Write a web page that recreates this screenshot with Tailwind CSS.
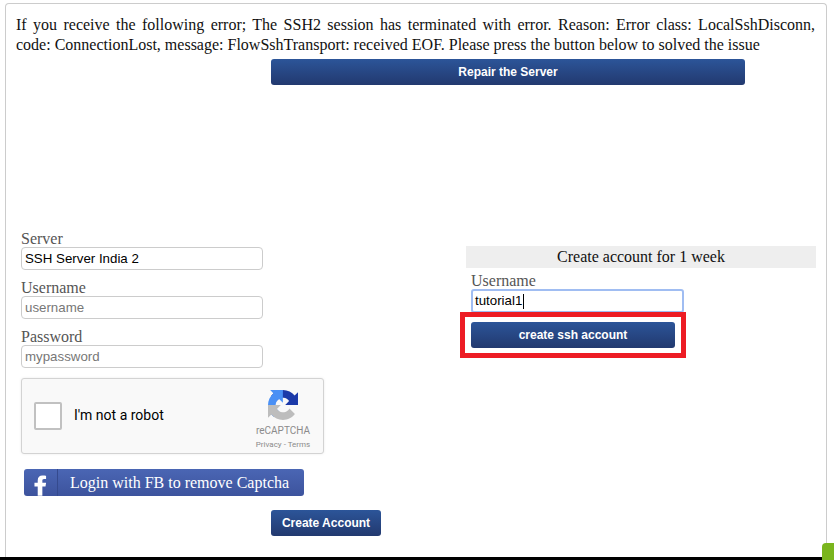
<!DOCTYPE html>
<html><head><meta charset="utf-8"><script src="https://cdn.jsdelivr.net/npm/@tailwindcss/browser@4"></script></head>
<body class="bg-white overflow-hidden">
<div class="relative h-[560px] w-[834px] overflow-hidden font-['Liberation_Serif',serif]">
  <main class="mx-[5px] mt-[3px] h-[554px] w-[822px] rounded-t-[4px] border border-b-0 border-[#cccccc] pl-[10px] pr-[11px] pt-[11px]">
    <div class="text-[16px] leading-[20px] text-[#111]">
      <p class="[text-align-last:justify]">If you receive the following error; The SSH2 session has terminated with error. Reason: Error class: LocalSshDisconn,</p>
      <p>code: ConnectionLost, message: FlowSshTransport: received EOF. Please press the button below to solved the issue</p>
    </div>
    <button class="ml-[255px] mt-[4px] block h-[26px] w-[474px] rounded-[3px] bg-gradient-to-b from-[#2c5599] to-[#22396f] font-['Liberation_Sans',sans-serif] text-[12px] font-bold text-white">Repair the Server</button>
    <div class="mt-[144px] flex">
      <section class="w-[450px] shrink-0 pl-[5px]">
        <label class="block h-[18px] text-[16px] leading-[20px] text-[#555]">Server</label>
        <div class="flex h-[23px] w-[242px] items-center rounded-[4px] border border-[#cccccc] pl-[3px] font-['Liberation_Sans',sans-serif] text-[13.3px] text-black">SSH Server India 2</div>
        <label class="mt-[9px] block h-[17px] text-[16px] leading-[18px] text-[#555]">Username</label>
        <div class="flex h-[23px] w-[242px] items-center rounded-[4px] border border-[#cccccc] pl-[3px] font-['Liberation_Sans',sans-serif] text-[13.3px] text-[#777]">username</div>
        <label class="mt-[9px] block h-[17px] text-[16px] leading-[18px] text-[#555]">Password</label>
        <div class="flex h-[23px] w-[242px] items-center rounded-[4px] border border-[#cccccc] pl-[3px] font-['Liberation_Sans',sans-serif] text-[13.3px] text-[#777]">mypassword</div>
        <div class="mt-[10px] flex h-[76px] w-[303px] items-center rounded-[3px] border border-[#d3d3d3] bg-[#f9f9f9] pl-[12px] shadow-[0_0_3px_rgba(0,0,0,0.08)] font-['Roboto',sans-serif]">
          <span class="block h-[28px] w-[28px] rounded-[2px] border-2 border-[#c1c1c1] bg-white"></span>
          <span class="ml-[12px] pb-[2px] text-[14px] text-black">I'm not a robot</span>
          <div class="ml-auto mr-[12px] flex w-[56px] flex-col items-center self-start pt-[11px] text-[#8b8b8b]">
            <svg width="30" height="30" viewBox="0 0 64 64" aria-hidden="true">
              <path d="M64 31.955l-.033-1.37V4.687l-7.16 7.16C50.948 4.674 42.033.093 32.05.093c-10.4 0-19.622 4.96-25.458 12.64l11.736 11.86c1.15-2.127 2.785-3.954 4.76-5.33 2.05-1.6 4.952-2.908 8.962-2.908.485 0 .86.057 1.133.163 4.967.392 9.273 3.134 11.808 7.11l-8.307 8.307c10.522-.04 22.4-.066 27.3.006" fill="#1c3aa9"/>
              <path d="M31.862.094l-1.37.033H4.594l7.16 7.16C4.58 13.147 0 22.06 0 32.046c0 10.4 4.96 19.622 12.64 25.458l11.86-11.736c-2.127-1.15-3.954-2.785-5.33-4.76-1.6-2.05-2.908-4.952-2.908-8.962 0-.485.057-.86.163-1.133.392-4.967 3.134-9.273 7.11-11.808l8.307 8.307c-.04-10.522-.066-22.4.006-27.3" fill="#4a90f5"/>
              <path d="M.001 32.045l.033 1.37v25.898l7.16-7.16c5.86 7.173 14.774 11.754 24.76 11.754 10.4 0 19.622-4.96 25.458-12.64l-11.736-11.86c-1.15 2.127-2.785 3.954-4.76 5.33-2.05 1.6-4.952 2.908-8.962 2.908-.485 0-.86-.057-1.133-.163-4.967-.392-9.273-3.134-11.808-7.11l8.307-8.307c-10.522.04-22.4.066-27.3-.006" fill="#bdbdbd"/>
            </svg>
            <span class="mt-[5px] text-[10px] leading-[12px]">reCAPTCHA</span>
            <span class="mt-[3px] whitespace-nowrap text-[8px] leading-[10px]">Privacy - Terms</span>
          </div>
        </div>
        <button class="mt-[15px] ml-[3px] flex h-[27px] w-[280px] items-stretch overflow-hidden rounded-[3px] bg-gradient-to-b from-[#4a66b4] to-[#3d539d] text-white">
          <span class="flex w-[34px] items-end justify-center border-r border-[#354a8e]">
            <svg width="13" height="21" viewBox="0 0 14 22" aria-hidden="true"><path d="M4 22 V12 H0.5 V8 H4 V5.5 C4 2 6 0.3 9 0.3 C10.8 0.3 12.2 0.5 13 0.6 V4 H11 C9.3 4 9 4.8 9 6 V8 H13 L12.4 12 H9 V22 Z" fill="#fff"/></svg>
          </span>
          <span class="pl-[12px] text-[16px] leading-[27px] whitespace-nowrap">Login with FB to remove Captcha</span>
        </button>
        <button class="ml-[250px] mt-[14px] block h-[26px] w-[110px] rounded-[3px] bg-gradient-to-b from-[#2c5599] to-[#22396f] font-['Liberation_Sans',sans-serif] text-[12px] font-bold text-white">Create Account</button>
      </section>
      <section class="w-[350px] shrink-0 pt-[17px]">
        <h2 class="h-[22px] bg-[#eeeeee] text-center text-[16px] font-normal leading-[22px] text-[#111]">Create account for 1 week</h2>
        <div class="pl-[5px]">
          <label class="mt-[4px] block h-[17px] text-[16px] leading-[18px] text-[#555]">Username</label>
          <div class="flex h-[24px] w-[213px] items-center rounded-[3px] border-2 border-[#a0bdf2] pl-[2px] font-['Liberation_Sans',sans-serif] text-[13.3px] text-black">tutorial1<span class="ml-[1px] inline-block h-[15px] w-px bg-black"></span></div>
          <button class="mt-[9px] block h-[26px] w-[204px] rounded-[3px] bg-gradient-to-b from-[#2c5599] to-[#22396f] font-['Liberation_Sans',sans-serif] text-[12px] font-bold text-white">create ssh account</button>
        </div>
      </section>
    </div>
  </main>
  <div class="absolute left-[460px] top-[312px] h-[46px] w-[226px] border-[5px] border-[#ed1c24]"></div>
  <div class="h-[3px] w-full bg-black"></div>
  <div class="absolute left-[822px] top-[543px] h-[17px] w-[12px] rounded-tl-[4px] bg-[#7ab51d]"></div>
</div>
</body></html>
